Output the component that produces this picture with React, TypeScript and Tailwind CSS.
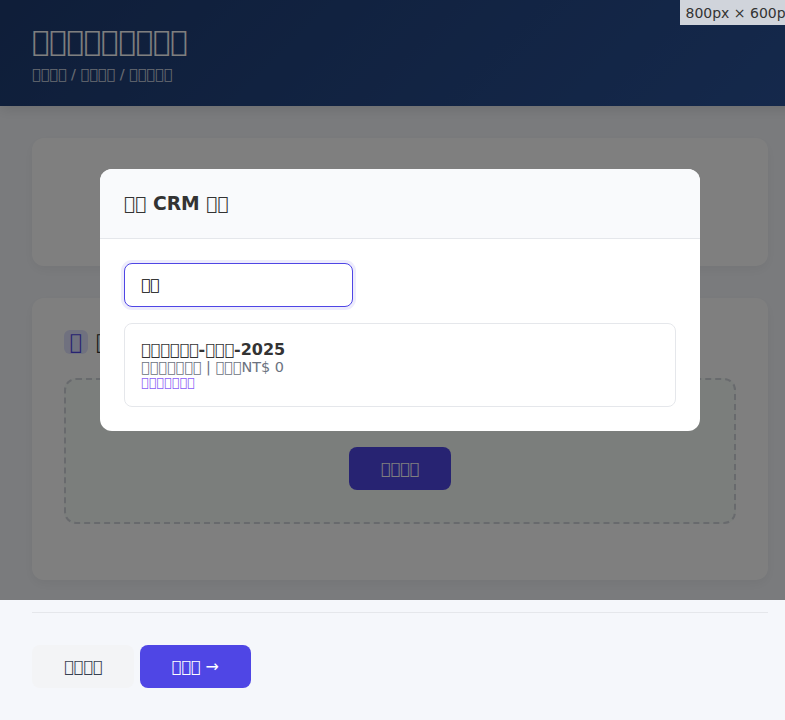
const BOX = '\u{F0000}';
const glyphs = (n: number) => BOX.repeat(n);

function Header() {
  return (
    <header className="h-[106px] bg-linear-135 from-[#1e3c72] to-[#2a5298] px-8 pt-6 text-white shadow-[0_4px_12px_rgba(0,0,0,0.1)]">
      <h1 className="text-[28.8px] leading-[34px]">{glyphs(9)}</h1>
      <p className="mt-[8px] text-[14.4px] leading-[17px] opacity-80">
        {glyphs(4)} / {glyphs(4)} / {glyphs(5)}
      </p>
    </header>
  );
}

function UploadCard() {
  return (
    <section className="mt-8 h-[282px] rounded-xl bg-white p-8 shadow-[0_4px_12px_rgba(0,0,0,0.05)]">
      <h2 className="flex h-6 items-center gap-2 text-[20.8px] leading-6 text-[#333]">
        <span className="flex h-6 w-6 items-center justify-center rounded-md bg-[#e0e3ff] text-[#4f46e5]">
          {BOX}
        </span>
        <span>{glyphs(4)}</span>
      </h2>
      <div className="mt-6 flex h-[146px] items-end justify-center rounded-xl border-2 border-dashed border-[#d1d5db] bg-[#f7fcf9] pb-8">
        <button className="h-[43px] rounded-lg bg-[#4f46e5] px-8 text-[16px] leading-[19px] text-white">
          {glyphs(4)}
        </button>
      </div>
    </section>
  );
}

function CrmModal() {
  return (
    <div className="h-[262px] w-[600px] overflow-hidden rounded-xl bg-white">
      <div className="h-[70px] border-b border-[#e5e7eb] bg-[#f9fafc] px-6 pt-[23px]">
        <h3 className="text-[18.72px] leading-[23px] font-bold text-[#333]">
          {glyphs(2)} CRM {glyphs(2)}
        </h3>
      </div>
      <div className="p-6">
        <input
          className="block h-[44px] w-[229px] rounded-lg border border-[#4f46e5] bg-white px-4 text-[15.2px] text-black shadow-[0_0_0_3px_rgba(79,70,229,0.1)] outline-none"
          defaultValue={glyphs(2)}
        />
        <div className="mt-4 h-[84px] rounded-lg border border-[#e5e7eb] px-4 pt-4">
          <div className="text-[16px] leading-[19px] font-bold text-[#333]">
            {glyphs(6)}-{glyphs(3)}-2025
          </div>
          <div className="text-[14.4px] leading-[16px] text-[#6b7280]">
            {glyphs(7)} | {glyphs(3)}NT$ 0
          </div>
          <div className="text-[12.8px] leading-[15px] text-[#8b5cf6]">{glyphs(7)}</div>
        </div>
      </div>
    </div>
  );
}

export default function App() {
  return (
    <div className="relative h-[720px] w-full overflow-hidden bg-[#f5f7fb] font-['DejaVu_Sans',sans-serif]">
      <div className="w-[800px]">
        <Header />
        <main className="p-8">
          <section className="h-32 rounded-xl bg-white shadow-[0_4px_12px_rgba(0,0,0,0.05)]" />
          <UploadCard />
          <footer className="mt-8 border-t border-[#e5e7eb] pt-8">
            <div className="flex gap-[5.2px] text-[16px] leading-[19px]">
              <button className="h-[43px] rounded-lg bg-[#f3f4f6] px-8 text-[#374151]">{glyphs(4)}</button>
              <button className="h-[43px] rounded-lg bg-[#4f46e5] px-8 text-white">{glyphs(3)} →</button>
            </div>
          </footer>
        </main>
      </div>
      <div className="absolute top-0 left-0 flex h-[600px] w-[800px] items-center justify-center bg-black/50">
        <CrmModal />
      </div>
      <div className="absolute top-0 left-[679.5px] h-[25px] w-[120px] bg-[#d0d4db] pl-[6px] text-[14px] leading-[26px] whitespace-nowrap text-[#333]">
        800px × 600px
      </div>
    </div>
  );
}
